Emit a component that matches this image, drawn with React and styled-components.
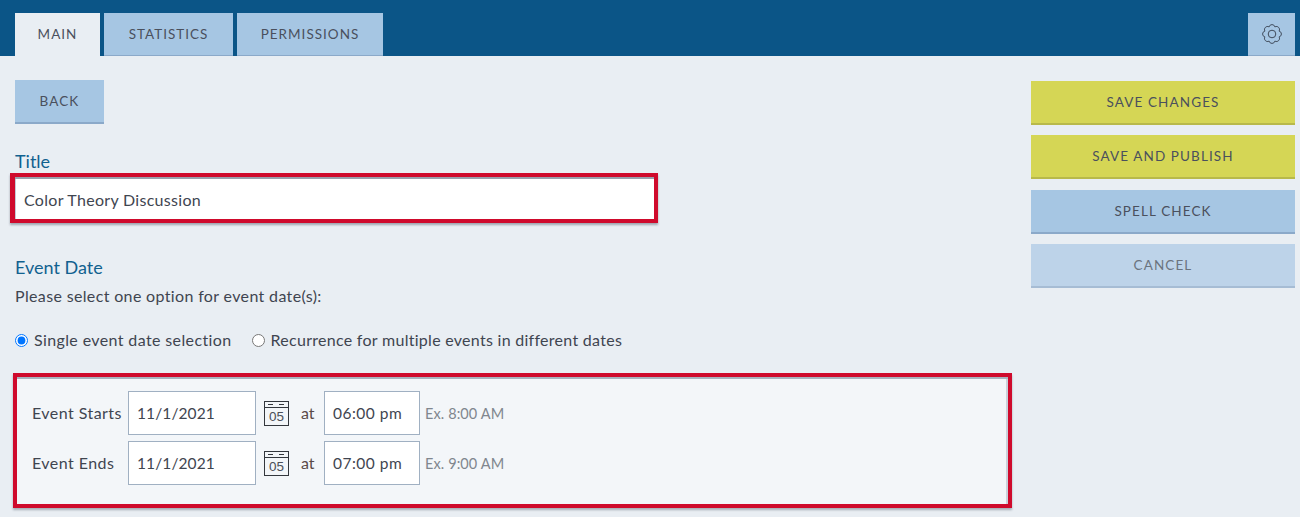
import React from 'react';
import styled, { createGlobalStyle } from 'styled-components';

const GlobalStyle = createGlobalStyle`
  html, body {
    margin: 0;
    padding: 0;
    height: 517px;
    overflow: hidden;
    background: #e9eef3;
    font-family: 'Lato', 'Liberation Sans', sans-serif;
    color: #3f4550;
  }
`;

const Header = styled.header`
  display: flex;
  align-items: flex-end;
  justify-content: space-between;
  height: 56px;
  padding: 0 5px 0 15px;
  background: #0b5587;
`;

const Tabs = styled.nav`
  display: flex;
  gap: 4px;
`;

const Tab = styled.button`
  width: ${(p) => p.$width}px;
  height: 43px;
  padding: 0;
  border: none;
  border-bottom: 1px solid ${(p) => (p.$active ? '#e9eef3' : '#8ba9c9')};
  background: ${(p) => (p.$active ? '#e9eef3' : '#a6c6e3')};
  color: #4a505d;
  font: 400 13.5px 'Lato', sans-serif;
  letter-spacing: 1px;
  text-transform: uppercase;
`;

const GearButton = styled.button`
  display: flex;
  align-items: center;
  justify-content: center;
  width: 47px;
  height: 43px;
  padding: 0;
  border: none;
  border-bottom: 1px solid #8ba9c9;
  background: #a6c6e3;
`;

const Page = styled.main`
  display: flex;
  justify-content: space-between;
  padding: 24px 5px 0 15px;
`;

const Content = styled.section`
  width: 997px;
  margin-left: -2px;
`;

const Side = styled.aside`
  display: flex;
  flex-direction: column;
  gap: 10px;
  width: 264px;
  padding-top: 1px;
`;

const ActionButton = styled.button`
  width: ${(p) => (p.$width ? `${p.$width}px` : '100%')};
  height: 44px;
  margin-top: ${(p) => p.$top || 0}px;
  padding: 0;
  border: none;
  border-bottom: 2px solid ${(p) => p.$edge};
  background: ${(p) => p.$bg};
  color: ${(p) => p.$color || '#4a505d'};
  font: 400 13.5px 'Lato', sans-serif;
  letter-spacing: 1.1px;
  text-transform: uppercase;
`;

const BackRow = styled.div`
  margin-left: 2px;
`;

const SectionLabel = styled.h2`
  margin: ${(p) => p.$top}px 0 0 2px;
  font-size: 18px;
  font-weight: 400;
  line-height: 22px;
  color: #11618f;
`;

const HighlightInput = styled.div`
  display: flex;
  align-items: center;
  box-sizing: border-box;
  width: 648px;
  height: 50px;
  margin: 1px 0 0 -3px;
  padding: 2px 0 0 9px;
  border: 4px solid #cf0a2c;
  border-left-width: 5px;
  background: #fff;
  box-shadow: 0 2px 2px rgba(70, 80, 95, 0.45), inset 0 2px 0 #9aa0ad, inset 1px 0 0 #c3ccd8;
  font-size: 16px;
  letter-spacing: 0.3px;
  color: #3f4550;
`;

const HelpText = styled.p`
  margin: 7px 0 0 2px;
  font-size: 16px;
  line-height: 22px;
  letter-spacing: 0.35px;
`;

const RadioRow = styled.div`
  display: flex;
  gap: 20px;
  margin: 21px 0 0 2px;
  height: 22px;
`;

const RadioLabel = styled.label`
  display: flex;
  align-items: center;
  gap: 6px;
  font-size: 16px;
  letter-spacing: ${(p) => p.$spacing}px;
`;

const Radio = styled.input.attrs({ type: 'radio' })`
  width: 13px;
  height: 13px;
  margin: 2px 0 0;
`;

const DateBox = styled.div`
  display: flex;
  flex-direction: column;
  gap: 6px;
  width: 999px;
  height: 135px;
  box-sizing: border-box;
  margin-top: 23px;
  padding: 14px 0 0 15px;
  border: 4px solid #cf0a2c;
  background: #f3f6f9;
  box-shadow: 0 2px 2px rgba(70, 80, 95, 0.4), inset 0 2px 0 #a9b2be, inset -2px 0 0 #c9d1db;
`;

const DateRow = styled.div`
  display: flex;
  align-items: center;
`;

const RowLabel = styled.span`
  width: 96px;
  padding-bottom: 2px;
  font-size: 16px;
  letter-spacing: 0.45px;
`;

const Field = styled.div`
  display: flex;
  align-items: center;
  box-sizing: border-box;
  width: ${(p) => p.$width}px;
  height: 44px;
  padding-left: 8px;
  border: 1px solid #a0b0c2;
  background: #fff;
  font-size: 15.5px;
  letter-spacing: ${(p) => p.$spacing}px;
`;

const CalendarButton = styled.span`
  display: flex;
  margin-left: 8px;
`;

const At = styled.span`
  width: 35px;
  padding: 0 0 2px 12px;
  box-sizing: border-box;
  font-size: 16px;
  color: #5a4a48;
`;

const Hint = styled.span`
  margin-left: 5px;
  font-size: 14.5px;
  letter-spacing: 0.1px;
  color: #80868e;
`;

const CalendarIcon = () => (
  <svg width="25" height="25" viewBox="0 0 25 25" fill="none" stroke="#33373d">
    <rect x="0.5" y="0.5" width="24" height="24" />
    <path d="M0.5 6.5H24.5M4 3.5H9M15 3.5H20" />
    <text x="12.5" y="20" fontSize="13.5" fontFamily="Liberation Sans, sans-serif" textAnchor="middle" fill="#4a4f57" stroke="none">
      05
    </text>
  </svg>
);

// eight rounded lobes around the centre of a 22x22 box
const gearPath = () => {
  const point = (r, a) => `${(11 + r * Math.cos(a)).toFixed(2)} ${(11 + r * Math.sin(a)).toFixed(2)}`;
  const step = Math.PI / 4;
  let d = `M${point(7.6, -step / 2)}`;
  for (let i = 0; i < 8; i += 1) {
    const a = i * step;
    d += ` C${point(10.4, a - step * 0.3)} ${point(10.4, a + step * 0.3)} ${point(7.6, a + step / 2)}`;
  }
  return `${d}Z`;
};

const GearIcon = () => (
  <svg width="22" height="22" viewBox="0 0 22 22" fill="none" stroke="#3f4a5a" strokeWidth="1">
    <path d={gearPath()} />
    <circle cx="11" cy="11" r="3.8" />
  </svg>
);

const dates = [
  { label: 'Event Starts', time: '06:00 pm', hint: 'Ex. 8:00 AM' },
  { label: 'Event Ends', time: '07:00 pm', hint: 'Ex. 9:00 AM' },
];

const App = () => (
  <>
    <GlobalStyle />
    <Header>
      <Tabs>
        <Tab $width={85} $active>Main</Tab>
        <Tab $width={129}>Statistics</Tab>
        <Tab $width={146}>Permissions</Tab>
      </Tabs>
      <GearButton aria-label="Settings">
        <GearIcon />
      </GearButton>
    </Header>
    <Page>
      <Content>
        <BackRow>
          <ActionButton $width={89} $bg="#a6c6e3" $edge="#8ba9c9">Back</ActionButton>
        </BackRow>
        <SectionLabel $top={26}>Title</SectionLabel>
        <HighlightInput>Color Theory Discussion</HighlightInput>
        <SectionLabel $top={33}>Event Date</SectionLabel>
        <HelpText>Please select one option for event date(s):</HelpText>
        <RadioRow>
          <RadioLabel $spacing={0.38}><Radio name="dates" defaultChecked />Single event date selection</RadioLabel>
          <RadioLabel $spacing={0.28}><Radio name="dates" />Recurrence for multiple events in different dates</RadioLabel>
        </RadioRow>
        <DateBox>
          {dates.map((d) => (
            <DateRow key={d.label}>
              <RowLabel>{d.label}</RowLabel>
              <Field $width={128} $spacing={0.1}>11/1/2021</Field>
              <CalendarButton><CalendarIcon /></CalendarButton>
              <At>at</At>
              <Field $width={96} $spacing={0.5}>{d.time}</Field>
              <Hint>{d.hint}</Hint>
            </DateRow>
          ))}
        </DateBox>
      </Content>
      <Side>
        <ActionButton $bg="#d5d655" $edge="#b8b94a">Save Changes</ActionButton>
        <ActionButton $bg="#d5d655" $edge="#b8b94a">Save and Publish</ActionButton>
        <ActionButton $top={1} $bg="#a6c6e3" $edge="#8ba9c9">Spell Check</ActionButton>
        <ActionButton $bg="#bdd3e9" $edge="#a6bcd4" $color="#6b737e">Cancel</ActionButton>
      </Side>
    </Page>
  </>
);

export default App;
